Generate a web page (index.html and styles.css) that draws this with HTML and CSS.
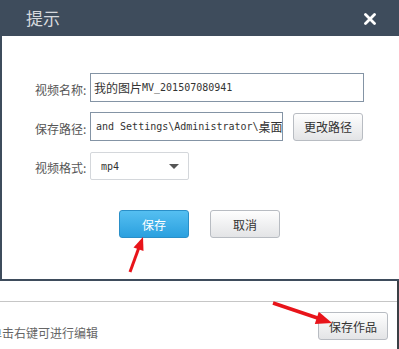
FILE: index.html
```html
<!DOCTYPE html>
<html lang="zh-CN">
<head>
  <meta charset="UTF-8">
  <title>提示</title>
  <link rel="stylesheet" href="styles.css">
</head>
<body>
  <div class="dialog">
    <div class="dialog-head">
      <span class="dialog-title">提示</span>
      <span class="dialog-close">
        <svg width="12" height="12" viewBox="0 0 12 12"><path d="M1.5 1.5 L10.5 10.5 M10.5 1.5 L1.5 10.5" stroke="#fff" stroke-width="2.8" stroke-linecap="round"/></svg>
      </span>
    </div>
    <div class="dialog-body">
      <div class="form-row">
        <span class="form-label">视频名称:</span>
        <div class="field field-name"><span>我的图片</span><span class="mono">MV_201507080941</span></div>
      </div>
      <div class="form-row">
        <span class="form-label">保存路径:</span>
        <div class="field field-path"><span class="mono">and Settings\Administrator\</span><span>桌面</span></div>
        <button class="btn btn-path">更改路径</button>
      </div>
      <div class="form-row form-row-select">
        <span class="form-label">视频格式:</span>
        <div class="select"><span class="mono">mp4</span><span class="caret"></span></div>
      </div>
      <div class="actions">
        <button class="btn btn-primary">保存</button>
        <button class="btn">取消</button>
      </div>
    </div>
  </div>

  <div class="panel">
    <div class="panel-top"></div>
    <div class="panel-bar">
      <span class="hint">单击右键可进行编辑</span>
      <button class="btn">保存作品</button>
    </div>
  </div>

  <!-- red arrows drawn over the screenshot -->
  <svg class="arrows" width="399" height="349" viewBox="0 0 399 349">
    <line x1="130" y1="272" x2="139.5" y2="246" stroke="#e8141a" stroke-width="3"/>
    <polygon points="143,237 143.5,251 133.5,247.5" fill="#e8141a"/>
    <line x1="273" y1="303" x2="319" y2="318.5" stroke="#e8141a" stroke-width="3.5"/>
    <polygon points="332,323 314.8,324 318.8,311.8" fill="#e8141a"/>
  </svg>
</body>
</html>
```

FILE: styles.css
```css
body {
  margin: 0;
  width: 399px;
  height: 349px;
  overflow: hidden;
  position: relative;
  background: #fff;
  font-family: "Noto Sans CJK SC", sans-serif;
}
.dialog {
  width: 399px;
  box-sizing: border-box;
  border-left: 2px solid #3e4c5c;
  border-bottom: 2px solid #3e4c5c;
  background: #fff;
}
.dialog-head {
  height: 36px;
  background: #3e4c5c;
  display: flex;
  align-items: center;
  justify-content: space-between;
  padding: 0 23px 0 24px;
}
.dialog-title {
  font-size: 17px;
  color: #d6d9dd;
  margin-top: -2px;
}
.dialog-close {
  display: flex;
  margin-top: 2px;
}
.dialog-body {
  height: 243px;
  box-sizing: border-box;
  padding: 37px 0 0 33px;
}
.form-row {
  display: flex;
  align-items: center;
  height: 29px;
}
.form-row + .form-row {
  margin-top: 10px;
}
.form-row-select {
  height: 28px;
}
.form-row + .form-row-select {
  margin-top: 11px;
}
.form-label {
  width: 55px;
  font-size: 12px;
  color: #555;
  padding-top: 3px;
}
.field {
  height: 29px;
  box-sizing: border-box;
  border: 1px solid #8494a5;
  display: flex;
  align-items: center;
  padding-left: 3px;
  font-size: 12px;
  color: #333;
  overflow: hidden;
  white-space: nowrap;
}
.field-name {
  width: 274px;
}
.field-path {
  width: 193px;
  padding-left: 5px;
}
.mono {
  font-family: "DejaVu Sans Mono", monospace;
  font-size: 10px;
}
.select {
  width: 99px;
  height: 28px;
  box-sizing: border-box;
  border: 1px solid #d4d7db;
  border-radius: 2px;
  display: flex;
  align-items: center;
  justify-content: space-between;
  padding: 0 9px 0 10px;
  color: #333;
}
.caret {
  width: 0;
  height: 0;
  border-left: 5px solid transparent;
  border-right: 5px solid transparent;
  border-top: 5px solid #555;
}
.btn {
  width: 70px;
  height: 28px;
  box-sizing: border-box;
  border: 1px solid #b8bcc2;
  border-radius: 3px;
  background: linear-gradient(#fefefe, #e3e4e6);
  font-family: "Noto Sans CJK SC", sans-serif;
  font-size: 12px;
  color: #333;
  display: flex;
  align-items: center;
  justify-content: center;
  padding: 0;
}
.btn-path {
  margin-left: 10px;
}
.btn-primary {
  background: linear-gradient(#55bff1, #2ba0df);
  border-color: #2a8fc8;
  color: #fff;
}
.actions {
  display: flex;
  gap: 21px;
  margin: 30px 0 0 84px;
}
.panel {
  width: 399px;
  height: 68px;
  box-sizing: border-box;
  border-right: 2px solid #3a3f45;
}
.panel-top {
  height: 20px;
  border-bottom: 1px solid #c6c6c6;
}
.panel-bar {
  display: flex;
  justify-content: space-between;
  align-items: flex-start;
  padding: 10px 9px 0 0;
}
.hint {
  margin: 12px 0 0 -10px;
  font-size: 12px;
  color: #666;
}
.arrows {
  position: absolute;
  top: 0;
  left: 0;
  pointer-events: none;
}
```
